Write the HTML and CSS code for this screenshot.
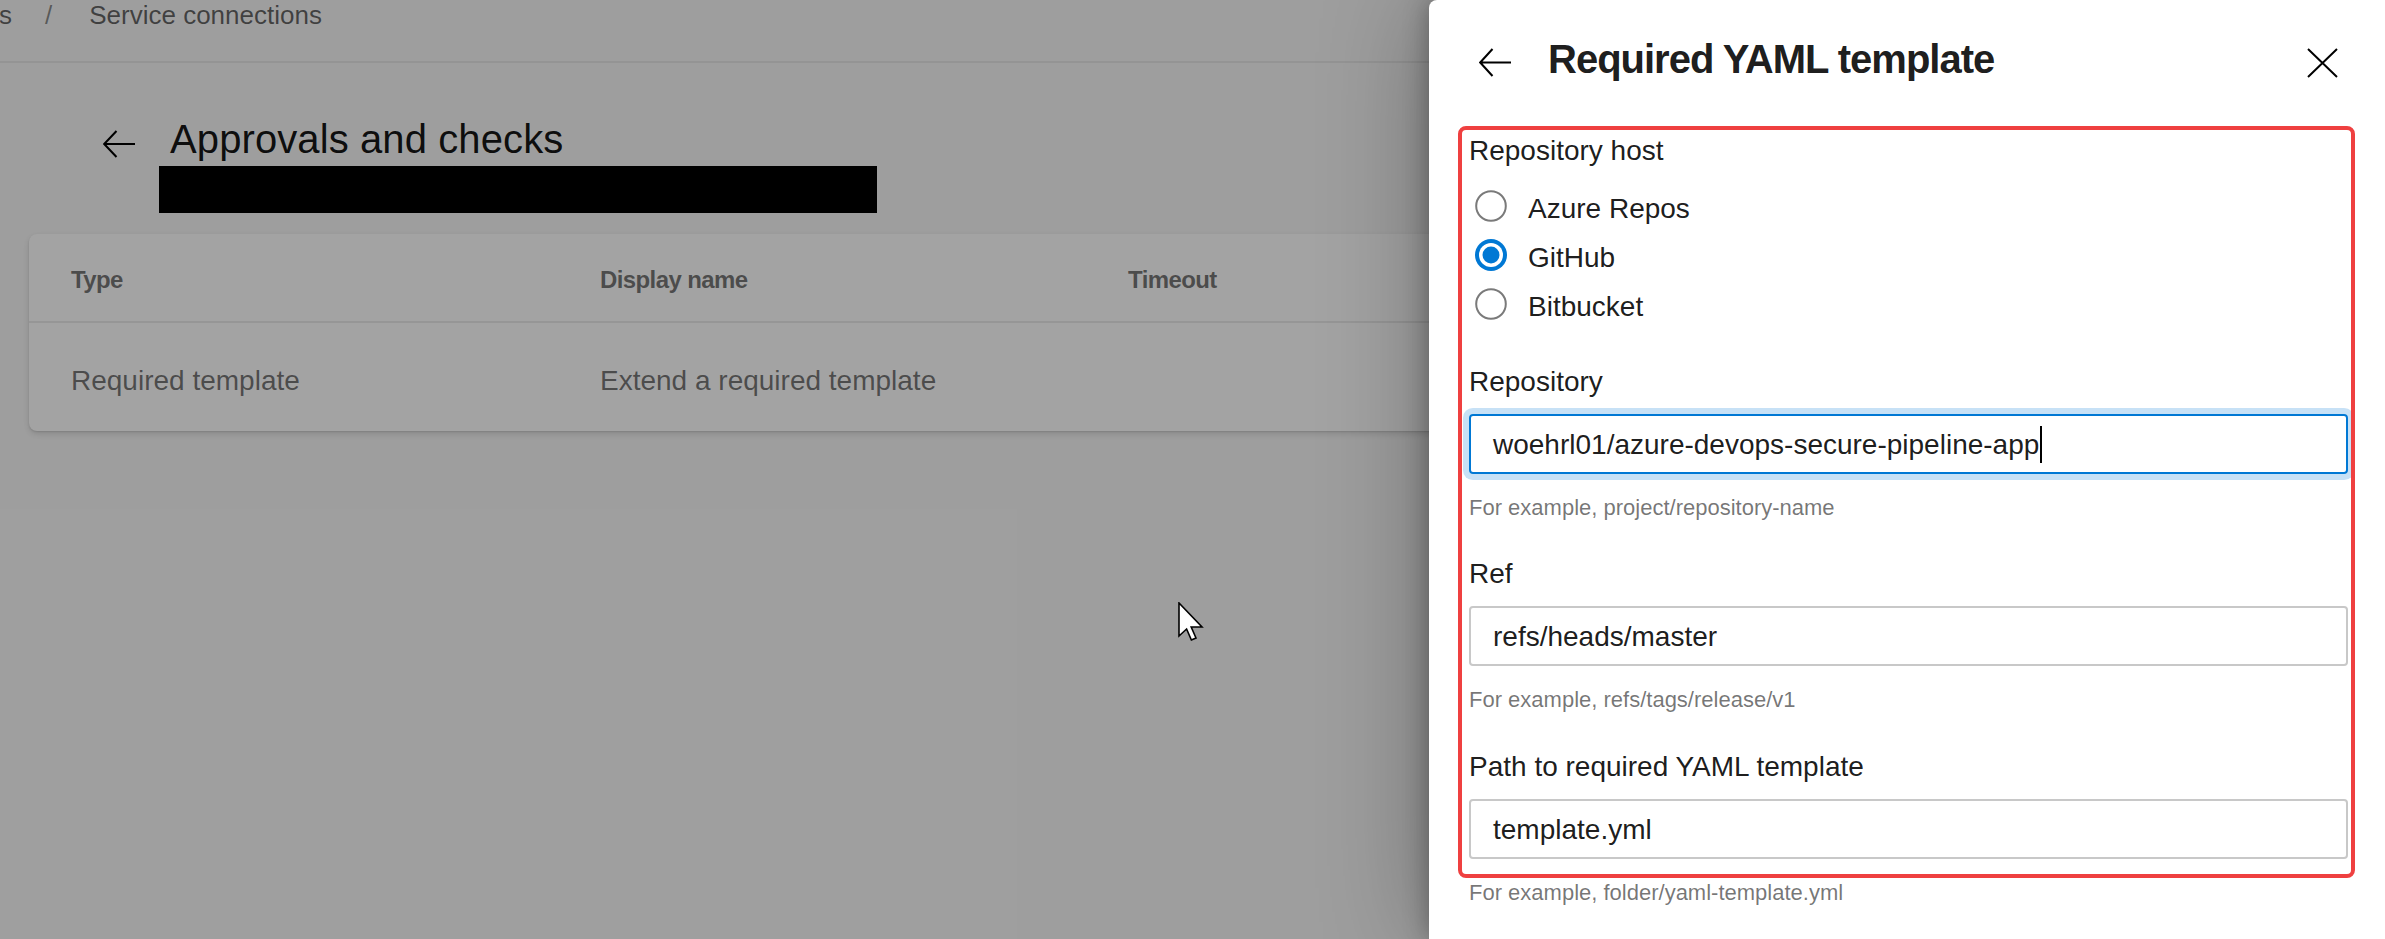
FILE: index.html
```html
<!DOCTYPE html>
<html lang="en">
<head>
<meta charset="utf-8">
<title>Approvals and checks</title>
<link rel="stylesheet" href="styles.css">
</head>
<body>
<div class="page">
  <header class="topbar">
    <nav class="crumbs">
      <span class="crumb first">s</span>
      <span class="sep">/</span>
      <span class="crumb">Service connections</span>
    </nav>
  </header>
  <main class="content">
    <div class="page-head">
      <svg class="back-icon" width="32" height="28" viewBox="0 0 32 28" aria-hidden="true">
        <path d="M13.5 1 L1.2 14 L13.5 27 M1.2 14 H32" fill="none" stroke="#000" stroke-width="2"/>
      </svg>
      <div class="title-col">
        <h1 class="page-title">Approvals and checks</h1>
        <div class="redact"></div>
      </div>
    </div>
    <section class="card">
      <div class="thead">
        <div class="th">Type</div>
        <div class="th">Display name</div>
        <div class="th">Timeout</div>
      </div>
      <div class="trow">
        <div class="td">Required template</div>
        <div class="td">Extend a required template</div>
        <div class="td"></div>
      </div>
    </section>
  </main>
</div>

<div class="scrim"></div>

<aside class="panel">
  <div class="panel-head">
    <svg class="panel-back" width="32" height="29" viewBox="0 0 32 29" aria-hidden="true">
      <path d="M13.5 1 L1.2 14.5 L13.5 28 M1.2 14.5 H32" fill="none" stroke="#000" stroke-width="2"/>
    </svg>
    <h2 class="panel-title">Required YAML template</h2>
    <svg class="panel-close" width="31" height="30" viewBox="0 0 31 30" aria-hidden="true">
      <path d="M1 1 L30 29 M30 1 L1 29" fill="none" stroke="#000" stroke-width="2"/>
    </svg>
  </div>
  <div class="panel-body">
    <div class="field">
      <div class="label">Repository host</div>
      <div class="radios">
        <div class="radio-row">
          <svg class="radio" width="32" height="32" viewBox="0 0 32 32"><circle cx="16" cy="16" r="14.8" fill="#fff" stroke="#7a7a7a" stroke-width="2"/></svg>
          <span class="radio-label">Azure Repos</span>
        </div>
        <div class="radio-row">
          <svg class="radio" width="32" height="32" viewBox="0 0 32 32"><circle cx="16" cy="16" r="16" fill="#0078d4"/><circle cx="16" cy="16" r="12" fill="#fff"/><circle cx="16" cy="16" r="8.5" fill="#0078d4"/></svg>
          <span class="radio-label">GitHub</span>
        </div>
        <div class="radio-row">
          <svg class="radio" width="32" height="32" viewBox="0 0 32 32"><circle cx="16" cy="16" r="14.8" fill="#fff" stroke="#7a7a7a" stroke-width="2"/></svg>
          <span class="radio-label">Bitbucket</span>
        </div>
      </div>
    </div>

    <div class="field spaced">
      <div class="label">Repository</div>
      <div class="textbox focused"><span class="value">woehrl01/azure-devops-secure-pipeline-app</span><span class="caret"></span></div>
      <div class="hint">For example, project/repository-name</div>
    </div>

    <div class="field gap">
      <div class="label">Ref</div>
      <div class="textbox"><span class="value">refs/heads/master</span></div>
      <div class="hint">For example, refs/tags/release/v1</div>
    </div>

    <div class="field gap">
      <div class="label">Path to required YAML template</div>
      <div class="textbox"><span class="value">template.yml</span></div>
      <div class="hint">For example, folder/yaml-template.yml</div>
    </div>
  </div>
  <div class="annotation"></div>
</aside>

<svg class="cursor" width="27" height="40" viewBox="0 0 27 40" aria-hidden="true">
  <path d="M1 1 L1 34 L8.6 27 L13.4 38 L18 36 L13.2 25 L24 25 Z" fill="#fff" stroke="#000" stroke-width="1.6" stroke-linejoin="miter"/>
</svg>
</body>
</html>
```

FILE: styles.css
```css
* { box-sizing: border-box; }

html, body {
  margin: 0;
  padding: 0;
  width: 100%;
  height: 100%;
  overflow: hidden;
}

body {
  position: relative;
  background: #f8f8f8;
  font-family: "Segoe UI", "Liberation Sans", Arial, sans-serif;
  color: rgba(0, 0, 0, 0.9);
}

/* ---------- underlying page ---------- */
.page {
  height: 100%;
}

.topbar {
  height: 63px;
  border-bottom: 2px solid #e8e8e8;
}

.crumbs {
  display: flex;
  align-items: baseline;
  font-size: 26px;
  line-height: 30px;
  color: rgba(0, 0, 0, 0.6);
}

.crumb.first { margin-left: -1px; }

.sep {
  margin: 0 37px 0 33px;
  color: rgba(0, 0, 0, 0.45);
}

.content {
  display: flex;
  flex-direction: column;
}

.page-head {
  display: flex;
  align-items: flex-start;
  padding: 48px 0 0 103px;
}

.back-icon {
  margin-top: 19px;
  flex: none;
}

.title-col {
  margin-left: 35px;
  display: flex;
  flex-direction: column;
}

.page-title {
  margin: 0;
  font-size: 40px;
  line-height: 56px;
  font-weight: 400;
  letter-spacing: 0.1px;
  color: rgba(0, 0, 0, 0.92);
}

.redact {
  margin: -1px 0 0 -11px;
  width: 718px;
  height: 47px;
  background: #000;
}

.card {
  margin: 21px 29px 0 29px;
  background: #fff;
  border-radius: 8px;
  box-shadow: 0 3px 7px rgba(0, 0, 0, 0.13), 0 1px 2px rgba(0, 0, 0, 0.11);
}

.thead,
.trow {
  display: grid;
  grid-template-columns: 529px 528px 1fr;
  align-items: center;
  padding-left: 42px;
}

.thead {
  height: 89px;
  border-bottom: 2px solid #ebebeb;
  padding-top: 5px;
}

.th {
  font-size: 24px;
  font-weight: 700;
  letter-spacing: -0.6px;
  color: rgba(0, 0, 0, 0.55);
}

.trow {
  height: 108px;
  padding-top: 8px;
}

.td {
  font-size: 28px;
  color: rgba(0, 0, 0, 0.55);
}

/* ---------- dimming layer ---------- */
.scrim {
  position: absolute;
  inset: 0;
  background: rgba(0, 0, 0, 0.36);
}

/* ---------- side panel ---------- */
.panel {
  position: absolute;
  top: 0;
  right: 0;
  bottom: 0;
  width: 956px;
  background: #fff;
  border-top-left-radius: 8px;
  box-shadow: 0 0 110px rgba(0, 0, 0, 0.32), 0 0 26px rgba(0, 0, 0, 0.32);
  display: flex;
  flex-direction: column;
}

.panel-head {
  display: flex;
  align-items: flex-start;
  padding: 31px 47px 0 50px;
  height: 88px;
}

.panel-back,
.panel-close {
  flex: none;
  margin-top: 17px;
}

.panel-title {
  flex: 1;
  margin: 0 0 0 37px;
  font-size: 40px;
  line-height: 56px;
  font-weight: 700;
  letter-spacing: -1px;
  color: rgba(0, 0, 0, 0.9);
}

.panel-body {
  padding: 41px 37px 0 40px;
  display: flex;
  flex-direction: column;
}

.field {
  display: flex;
  flex-direction: column;
}

.field.spaced { margin-top: 31px; }
.field.gap { margin-top: 28.5px; }

.label {
  font-size: 28px;
  line-height: 40px;
  padding-top: 2px;
  color: rgba(0, 0, 0, 0.9);
}

.radios {
  margin-top: 10.5px;
  display: flex;
  flex-direction: column;
}

.radio-row {
  display: flex;
  align-items: center;
  height: 49px;
}

.radio {
  flex: none;
  margin-left: 6px;
}

.radio-label {
  margin-left: 21px;
  font-size: 28px;
  line-height: 49px;
  padding-top: 5px;
  color: rgba(0, 0, 0, 0.9);
}

.textbox {
  margin-top: 12px;
  height: 60px;
  border: 2px solid #c8c8c8;
  border-radius: 4px;
  padding: 2px 0 0 22px;
  display: flex;
  align-items: center;
  font-size: 28px;
  line-height: 54px;
  color: rgba(0, 0, 0, 0.9);
  white-space: nowrap;
}

.textbox.focused {
  border-color: #0078d4;
  box-shadow: 0 0 0 6px rgba(0, 120, 212, 0.22);
}

.caret {
  display: inline-block;
  width: 2px;
  height: 37px;
  margin-left: 1px;
  background: #000;
}

.hint {
  margin-top: 18px;
  font-size: 22px;
  line-height: 32px;
  color: rgba(0, 0, 0, 0.55);
}

/* red annotation rectangle drawn over the form */
.annotation {
  position: absolute;
  left: 29px;
  top: 126px;
  width: 897px;
  height: 752px;
  border: 4px solid #ef4040;
  border-radius: 8px;
  pointer-events: none;
}

/* mouse pointer in the screenshot */
.cursor {
  position: absolute;
  left: 1178px;
  top: 602px;
}
```
